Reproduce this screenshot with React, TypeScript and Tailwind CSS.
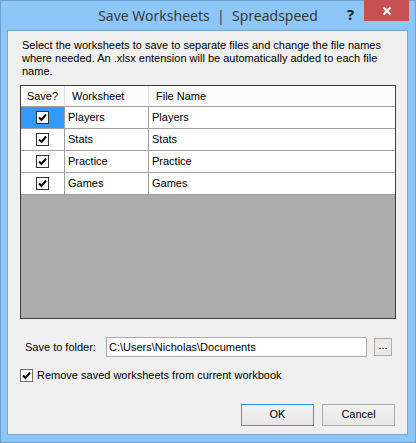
import { useState } from 'react'

const rows = ['Players', 'Stats', 'Practice', 'Games']

function Check({ dark = true }: { dark?: boolean }) {
  return (
    <span
      className={`flex h-[13px] w-[13px] shrink-0 items-center justify-center bg-white border ${dark ? 'border-[#333333]' : 'border-[#707070]'}`}
    >
      <svg width="9" height="9" viewBox="0 0 9 9">
        <path d="M1 4.5 L3.5 7 L8 1.5" fill="none" stroke="#000" strokeWidth="2" />
      </svg>
    </span>
  )
}

export default function App() {
  const [folder] = useState('C:\\Users\\Nicholas\\Documents')

  return (
    <div
      className="flex h-[443px] w-[416px] flex-col border border-[#6f9fcf] bg-[#8dc7fa] text-[11px] text-black"
      style={{ fontFamily: '"Liberation Sans", Arial, sans-serif' }}
    >
      {/* Title bar */}
      <div className="relative flex h-[29px] shrink-0 items-center justify-center">
        <span className="pb-[2px] pt-[1px] text-[14px] text-[#3a3a3a]" style={{ fontFamily: '"Noto Sans", sans-serif' }}>
          Save Worksheets&nbsp;&nbsp;|&nbsp;&nbsp;Spreadspeed
        </span>
        <span className="absolute left-[346px] top-[2px] text-[15px] font-bold text-[#222]" style={{ fontFamily: '"Noto Sans", sans-serif' }}>
          ?
        </span>
        <div className="absolute left-[363px] top-[-1px] flex h-[21px] w-[45px] items-center justify-center bg-[#c75050]">
          <svg width="10" height="10" viewBox="0 0 10 10">
            <path d="M1.5 1.5 L8.5 8.5 M8.5 1.5 L1.5 8.5" stroke="#fff" strokeWidth="2" />
          </svg>
        </div>
      </div>

      {/* Client area */}
      <div className="mb-[7px] ml-[6px] mr-[7px] flex flex-1 flex-col border border-[#79a5d3] bg-[#f0f0f0] pl-[12px] pr-[11px] pt-[8px]">
        <p className="w-[375px] pl-[2px] leading-[13px]">
          Select the worksheets to save to separate files and change the file names where needed. An .xlsx entension
          will be automatically added to each file name.
        </p>

        {/* Grid */}
        <div className="mt-[7px] flex h-[234px] w-[376px] flex-col border border-[#3c3c3c] bg-[#ababab]">
          <div className="grid h-[21px] grid-cols-[44px_84px_1fr] border-b border-[#a0a0a0] bg-[#fbfbfb]">
            <div className="flex items-center justify-center border-r border-[#e3e3e3]">Save?</div>
            <div className="flex items-center border-r border-[#e3e3e3] pl-[7px]">Worksheet</div>
            <div className="flex items-center pl-[7px]">File Name</div>
          </div>
          {rows.map((r, i) => (
            <div key={r} className="grid h-[22px] grid-cols-[44px_84px_1fr] border-b border-[#a0a0a0] bg-white">
              <div className={`flex items-center justify-center border-r border-[#a0a0a0] ${i === 0 ? 'bg-[#3399ff]' : ''}`}>
                <Check />
              </div>
              <div className="flex items-center border-r border-[#a0a0a0] pl-[3px]">{r}</div>
              <div className="flex items-center pl-[3px]">{r}</div>
            </div>
          ))}
        </div>

        {/* Folder */}
        <div className="mt-[18px] flex h-[20px] items-center">
          <span className="w-[86px] shrink-0 whitespace-nowrap pl-[5px]">Save to folder:</span>
          <div className="flex h-[20px] w-[261px] shrink-0 items-center border border-[#abadb3] bg-white pl-[2px]">
            {folder}
          </div>
          <button className="ml-[7px] flex h-[18px] w-[18px] shrink-0 items-start justify-center border border-[#adadad] bg-[#e9e9e9] text-[11px] leading-[12px]">
            ...
          </button>
        </div>

        <label className="mt-[10px] flex items-center gap-[4px]">
          <Check dark={false} />
          Remove saved worksheets from current workbook
        </label>

        {/* Buttons */}
        <div className="mt-[20px] flex justify-end gap-[8px] pr-[1px]">
          <button className="h-[22px] w-[73px] border border-[#3399ff] bg-gradient-to-b from-[#f2f2f2] to-[#e6e6e6]">
            OK
          </button>
          <button className="h-[22px] w-[73px] border border-[#adadad] bg-gradient-to-b from-[#f2f2f2] to-[#e6e6e6]">
            Cancel
          </button>
        </div>
      </div>
    </div>
  )
}
